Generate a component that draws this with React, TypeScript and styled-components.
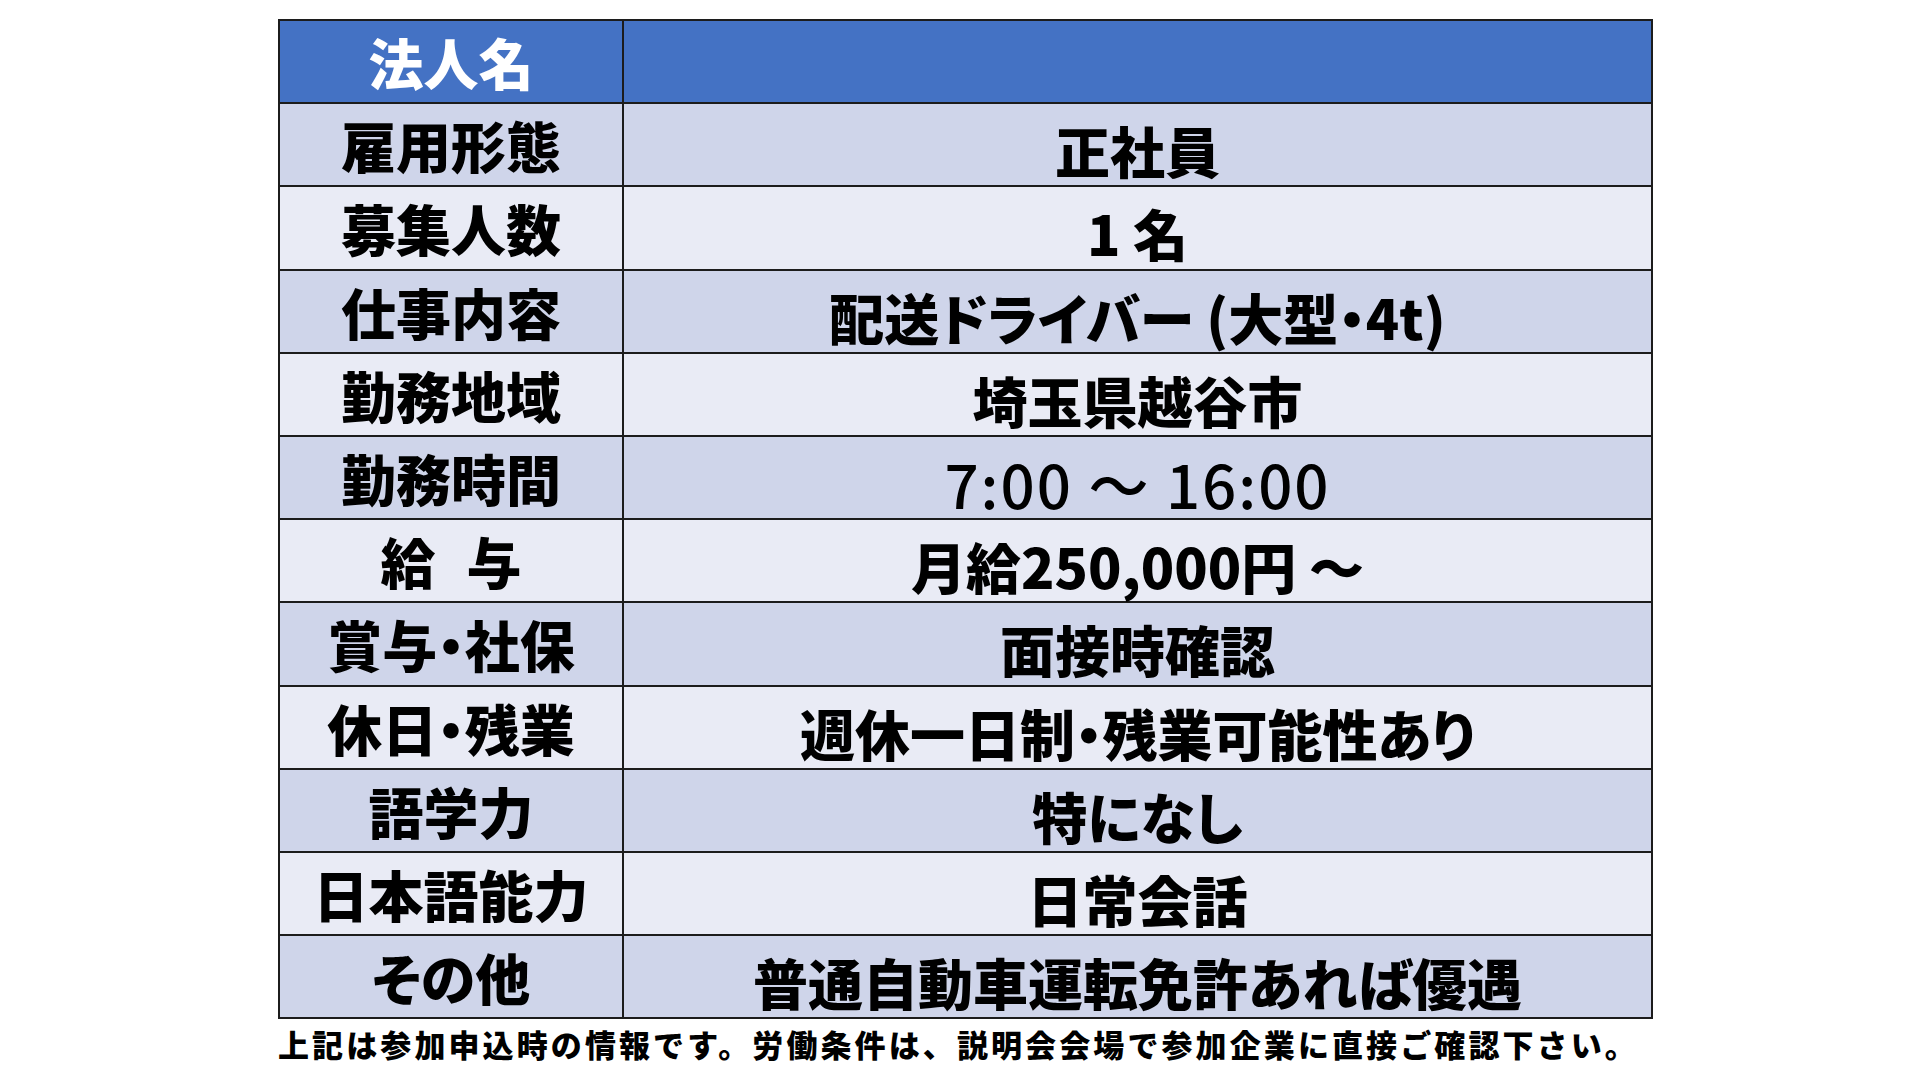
import styled, { createGlobalStyle } from 'styled-components';

const GlobalStyle = createGlobalStyle`
  html, body {
    margin: 0;
    padding: 0;
    background: #ffffff;
  }
  body {
    font-family: 'Noto Sans CJK JP', 'Noto Sans', sans-serif;
    color: #000000;
  }
`;

const Page = styled.div`
  width: 1920px;
  height: 1080px;
  box-sizing: border-box;
  padding: 19px 0 0 278px;
`;

const Sheet = styled.div`
  width: 1375px;
`;

const Table = styled.table`
  width: 100%;
  border-collapse: collapse;
  table-layout: fixed;
  font-feature-settings: 'palt';
`;

const Row = styled.tr<{ $tone: 'head' | 'dark' | 'light' }>`
  height: 83.2px;
  background-color: ${p =>
    p.$tone === 'head' ? '#4472c4' : p.$tone === 'dark' ? '#cfd5ea' : '#e9ebf5'};
`;

const LabelCell = styled.td<{ $head?: boolean }>`
  width: 342px;
  border: 2px solid #1c1c1c;
  padding: 0;
  text-align: center;
  vertical-align: middle;
  font-size: 55px;
  font-weight: 900;
  line-height: 1;
  color: ${p => (p.$head ? '#ffffff' : '#000000')};
`;

const ValueCell = styled.td<{ $light?: boolean }>`
  border: 2px solid #1c1c1c;
  padding: 10px 0 0;
  text-align: center;
  vertical-align: middle;
  font-size: ${p => (p.$light ? '60px' : '55px')};
  font-weight: ${p => (p.$light ? 500 : 900)};
  letter-spacing: ${p => (p.$light ? '2px' : '0')};
  line-height: 1;
`;

const Note = styled.p`
  margin: 9px 0 0;
  font-size: 31px;
  font-weight: 900;
  letter-spacing: 3.1px;
  line-height: 1;
  white-space: nowrap;
`;

const rows: { label: string; value: string; light?: boolean }[] = [
  { label: '雇用形態', value: '正社員' },
  { label: '募集人数', value: '1 名' },
  { label: '仕事内容', value: '配送ドライバー (大型・4t)' },
  { label: '勤務地域', value: '埼玉県越谷市' },
  { label: '勤務時間', value: '7:00 ～ 16:00', light: true },
  { label: '給\u2002\u200a与', value: '月給250,000円 ～' },
  { label: '賞与・社保', value: '面接時確認' },
  { label: '休日・残業', value: '週休一日制・残業可能性あり' },
  { label: '語学力', value: '特になし' },
  { label: '日本語能力', value: '日常会話' },
  { label: 'その他', value: '普通自動車運転免許あれば優遇' },
];

const App = () => (
  <>
    <GlobalStyle />
    <Page>
      <Sheet>
        <Table>
          <tbody>
            <Row $tone="head">
              <LabelCell $head>法人名</LabelCell>
              <ValueCell />
            </Row>
            {rows.map((row, i) => (
              <Row key={row.label} $tone={i % 2 === 0 ? 'dark' : 'light'}>
                <LabelCell>{row.label}</LabelCell>
                <ValueCell $light={row.light}>{row.value}</ValueCell>
              </Row>
            ))}
          </tbody>
        </Table>
        <Note>
          上記は参加申込時の情報です。労働条件は、説明会会場で参加企業に直接ご確認下さい。
        </Note>
      </Sheet>
    </Page>
  </>
);

export default App;
